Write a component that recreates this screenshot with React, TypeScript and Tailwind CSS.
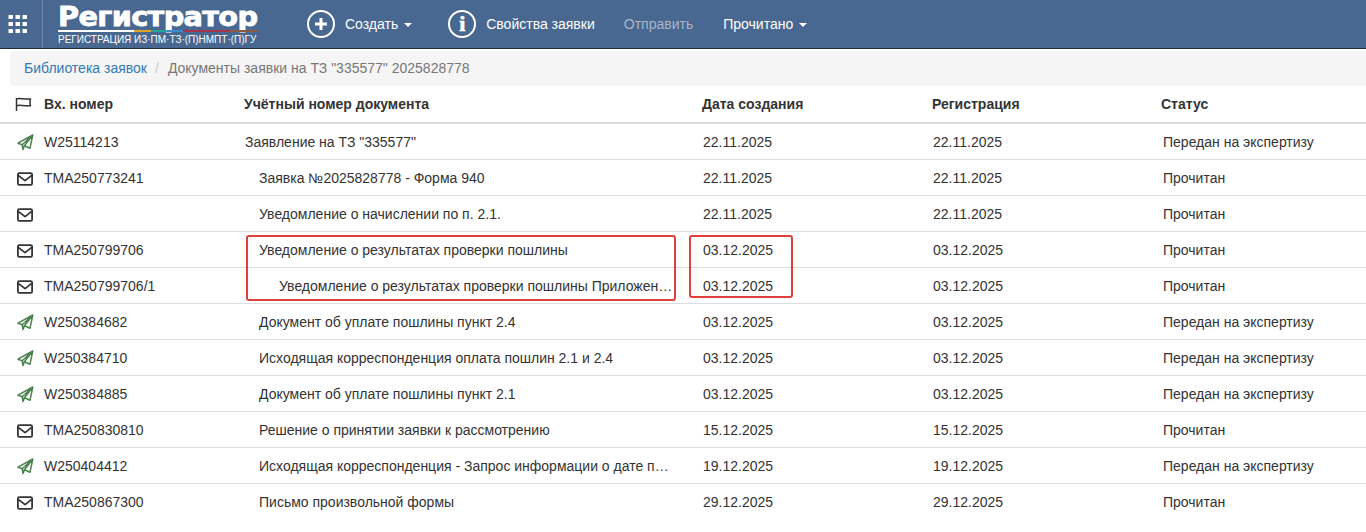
import React from "react";

const rows: [string, string, string, number, string, string, string][] = [
  ["send", "W25114213", "Заявление на ТЗ \"335577\"", 0, "22.11.2025", "22.11.2025", "Передан на экспертизу"],
  ["mail", "TMA250773241", "Заявка №2025828778 - Форма 940", 1, "22.11.2025", "22.11.2025", "Прочитан"],
  ["mail", "", "Уведомление о начислении по п. 2.1.", 1, "22.11.2025", "22.11.2025", "Прочитан"],
  ["mail", "TMA250799706", "Уведомление о результатах проверки пошлины", 1, "03.12.2025", "03.12.2025", "Прочитан"],
  ["mail", "TMA250799706/1", "Уведомление о результатах проверки пошлины Приложение 1", 2, "03.12.2025", "03.12.2025", "Прочитан"],
  ["send", "W250384682", "Документ об уплате пошлины пункт 2.4", 1, "03.12.2025", "03.12.2025", "Передан на экспертизу"],
  ["send", "W250384710", "Исходящая корреспонденция оплата пошлин 2.1 и 2.4", 1, "03.12.2025", "03.12.2025", "Передан на экспертизу"],
  ["send", "W250384885", "Документ об уплате пошлины пункт 2.1", 1, "03.12.2025", "03.12.2025", "Передан на экспертизу"],
  ["mail", "TMA250830810", "Решение о принятии заявки к рассмотрению", 1, "15.12.2025", "15.12.2025", "Прочитан"],
  ["send", "W250404412", "Исходящая корреспонденция - Запрос информации о дате принятия", 1, "19.12.2025", "19.12.2025", "Передан на экспертизу"],
  ["mail", "TMA250867300", "Письмо произвольной формы", 1, "29.12.2025", "29.12.2025", "Прочитан"],
];

function Mail() {
  return (
    <svg width="16" height="14" viewBox="0 0 16 14" fill="none" stroke="#333" strokeWidth="1.8" strokeLinejoin="round">
      <rect x="0.9" y="1.2" width="14.2" height="11.6" rx="1.4" />
      <path d="M1.2 3.4 8 8.6l6.8-5.200" />
    </svg>
  );
}

function Send() {
  return (
    <svg width="17" height="17" viewBox="0 0 17 17" fill="none" stroke="#4a8350" strokeWidth="1.5" strokeLinejoin="round" strokeLinecap="round">
      <path d="M15.8 1 1 9.2l4.2 1.6L15.800 1 7.4 11.800l5.600 2.400L15.800 1Z" />
      <path d="M5.200 10.800 6 15.600l1.400-3.800" />
    </svg>
  );
}

function Grid() {
  return (
    <svg width="20" height="18" viewBox="0 0 20 18" fill="#fff">
      {[0, 7, 14].flatMap((y) =>
        [0, 7, 14].map((x) => <rect key={`${x}-${y}`} x={x + 0.5} y={y} width="4.5" height="4" />)
      )}
    </svg>
  );
}

function Caret() {
  return <span className="ml-[6px] inline-block w-0 h-0 border-x-[4px] border-x-transparent border-t-[4px] border-t-current align-middle" />;
}

function CircleIcon({ children }: { children: React.ReactNode }) {
  return (
    <span className="w-[28px] h-[28px] rounded-full border-2 border-white flex items-center justify-center shrink-0">
      {children}
    </span>
  );
}

export default function App() {
  return (
    <div className="relative h-[532px] w-[1366px] overflow-hidden bg-white text-[14px] text-[#333] font-['Liberation_Sans',Arial,sans-serif]">
      <header className="h-[49px] bg-[#486891] border-b border-b-[#1f2b3a] flex items-stretch text-white">
        <div className="w-[43px] border-r border-r-[#7088a8] flex items-center pl-[8px]">
          <Grid />
        </div>
        <div className="w-[264px] pl-[15px] pt-[3px] shrink-0">
          <div className="relative h-[29px] w-[202px]">
            <div className="font-['DejaVu_Sans',sans-serif] font-bold text-[27px] leading-[27px] tracking-[-0.6px] [-webkit-text-stroke:0.8px_white] origin-left scale-x-[1.065] whitespace-nowrap">Регистратор</div>
            <div className="flex h-[2px] absolute left-0 bottom-0 w-[200px]">
              <div className="w-[76px] bg-white" />
              <div className="w-[17px] bg-[#e0a526]" />
              <div className="w-[17px] bg-[#23a59a]" />
              <div className="w-[15px] bg-[#3c8bd0]" />
              <div className="w-[46px] bg-[#a8324a]" />
              <div className="w-[29px] bg-[#8a5a44]" />
            </div>
          </div>
          <div className="text-[10px] leading-[12px] mt-[2px] whitespace-nowrap tracking-[-0.01px]">РЕГИСТРАЦИЯ ИЗ·ПМ·ТЗ·(П)НМПТ·(П)ГУ</div>
        </div>
        <nav className="flex items-center">
          <CircleIcon>
            <svg width="16" height="16" viewBox="0 0 16 16" fill="#fff"><path d="M6.500 2h3v4.500H14v3H9.500V14h-3V9.500H2v-3h4.500Z" /></svg>
          </CircleIcon>
          <span className="ml-[10px] mr-[36px] whitespace-nowrap">Создать<Caret /></span>
          <CircleIcon>
            <span className="font-['Liberation_Serif',serif] font-bold text-[22px] leading-none [-webkit-text-stroke:0.7px_white]">i</span>
          </CircleIcon>
          <span className="ml-[10px] whitespace-nowrap">Свойства заявки</span>
          <span className="ml-[29px] text-[#a9b6c9] whitespace-nowrap">Отправить</span>
          <span className="ml-[30px] whitespace-nowrap">Прочитано<Caret /></span>
        </nav>
      </header>

      <div className="ml-[10px] mt-[2px] h-[35px] bg-[#f5f5f5] rounded-l-[4px] flex items-center pl-[14px]">
        <span className="text-[#337ab7]">Библиотека заявок</span>
        <span className="text-[#ccc] pl-[8px] pr-[9px]">/</span>
        <span className="text-[#777]">Документы заявки на ТЗ "335577" 2025828778</span>
      </div>

      <div className="grid grid-cols-[44px_200px_458px_230px_229px_1fr] h-[37px] pb-[1px] items-center border-b-2 border-b-[#ddd] font-bold mt-[1px]">
        <div className="pl-[15px]">
          <svg width="17" height="15" viewBox="0 0 17 15" fill="none" stroke="#333" strokeWidth="1.5" strokeLinejoin="round" className="block">
            <path d="M1.500 1v13" />
            <path d="M1.500 1.700c4-1 6 .8 14 .2-1 2.500-1 4.500 0 6.800-7 .8-10-1.200-14 0" />
          </svg>
        </div>
        <div>Вх. номер</div>
        <div>Учётный номер документа</div>
        <div>Дата создания</div>
        <div>Регистрация</div>
        <div>Статус</div>
      </div>

      {rows.map(([icon, num, doc, lvl, d1, d2, st], i) => (
        <div key={i} className={`grid grid-cols-[44px_200px_458px_230px_229px_1fr] h-[36px] pt-[2px] items-center border-b ${i < rows.length - 1 ? "border-b-[#ddd]" : "border-b-transparent"}`}>
          <div className="pl-[17px] flex items-center">{icon === "send" ? <Send /> : <Mail />}</div>
          <div>{num}</div>
          <div className={`pl-px pr-[27px] truncate ${lvl === 1 ? "ml-[14px]" : lvl === 2 ? "ml-[34px]" : ""}`}>{doc}</div>
          <div className="pl-px">{d1}</div>
          <div className="pl-px">{d2}</div>
          <div className="pl-[2px]">{st}</div>
        </div>
      ))}

      <div className="absolute left-[246px] top-[235px] w-[430px] h-[66px] border-2 border-[#e0403c] rounded-[3px]" />
      <div className="absolute left-[689px] top-[235px] w-[104px] h-[63px] border-2 border-[#e0403c] rounded-[3px]" />
    </div>
  );
}
